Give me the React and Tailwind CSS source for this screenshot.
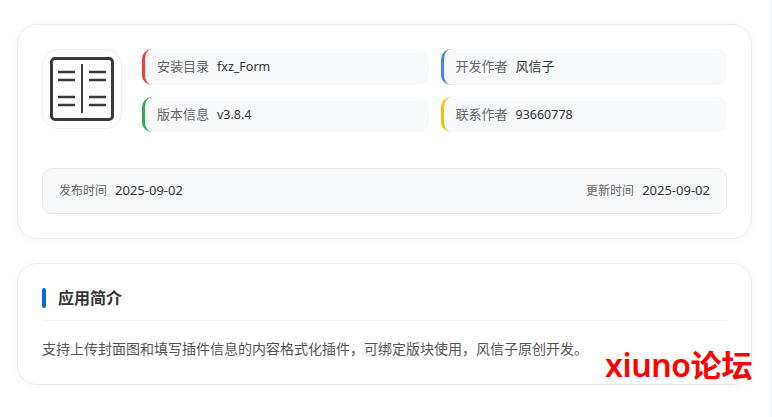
function Info({ color, label, value, size }) {
  return (
    <div className={`flex items-center rounded-[10px] border-l-[3px] bg-[#f8f9fa] pl-3 text-[13px] ${color}`}>
      <div className="flex items-baseline">
        <span className="mr-2 text-[#666]">{label}</span>
        <span className={`text-[#333] ${size}`}>{value}</span>
      </div>
    </div>
  );
}

export default function App() {
  return (
    <div className="relative h-[417px] w-[772px] overflow-hidden bg-white px-[17px] pt-6 font-['Noto_Sans','Noto_Sans_CJK_SC',sans-serif]">
      <div className="h-[215px] w-[735px] rounded-[20px] border border-[#e9ecef] bg-white p-6 shadow-[0_2px_12px_rgba(0,0,0,0.03)]">
        <div className="flex gap-5">
          <div className="flex h-20 w-20 shrink-0 items-center justify-center rounded-2xl border border-[#f0f0f0] bg-white">
            <svg width="64" height="64" viewBox="0 0 64 64" fill="none" stroke="#3a3a3a">
              <rect x="1.5" y="1.5" width="61" height="61" rx="3.5" strokeWidth="3" />
              <path d="M32 7v49" strokeWidth="2" />
              <path d="M8 15h17M8 23h17M8 40h17M8 48h17M39 15h17M39 23h17M39 40h17M39 48h17" strokeWidth="2.5" />
            </svg>
          </div>
          <div className="grid flex-1 grid-cols-2 grid-rows-[36px_35px] content-start gap-3">
            <Info color="border-[#ea4335]" label="安装目录" value="fxz_Form" size="text-[12.5px]" />
            <Info color="border-[#4285f4]" label="开发作者" value="风信子" size="text-[13px]" />
            <Info color="border-[#34a853]" label="版本信息" value="v3.8.4" size="text-[12.5px]" />
            <Info color="border-[#fbbc05]" label="联系作者" value="93660778" size="text-[12.5px]" />
          </div>
        </div>
        <div className="mt-9 flex h-[46px] items-center justify-between rounded-[10px] border border-[#e9ecef] bg-[#f8f9fa] px-4">
          <div className="flex items-baseline"><span className="mr-2 text-[12px] text-[#666]">发布时间</span><span className="text-[13px] text-[#333]">2025-09-02</span></div>
          <div className="flex items-baseline"><span className="mr-2 text-[12px] text-[#666]">更新时间</span><span className="text-[13px] text-[#333]">2025-09-02</span></div>
        </div>
      </div>
      <div className="mt-6 h-[122px] w-[735px] rounded-[20px] border border-[#e9ecef] bg-white px-6 pt-6 shadow-[0_2px_12px_rgba(0,0,0,0.03)]">
        <div className="flex h-[33px] items-start border-b border-[#f5f5f5]">
          <div className="h-5 w-1 rounded-sm bg-[#0768e0]" />
          <h2 className="ml-3 text-[16px] font-semibold leading-5 text-[#333]">应用简介</h2>
        </div>
        <p className="mt-[18px] text-[14px] leading-5 text-[#555]">支持上传封面图和填写插件信息的内容格式化插件，可绑定版块使用，风信子原创开发。</p>
      </div>
      <div className="absolute left-[605px] top-[343px] flex items-baseline font-semibold leading-[44px] text-[#ff0000]">
        <span className="text-[32px] tracking-[-0.4px]">xiuno</span>
        <span className="text-[31px]">论坛</span>
      </div>
      <div className="absolute inset-y-0 right-0 w-[2px] bg-[#f3f5f9]" />
    </div>
  );
}
